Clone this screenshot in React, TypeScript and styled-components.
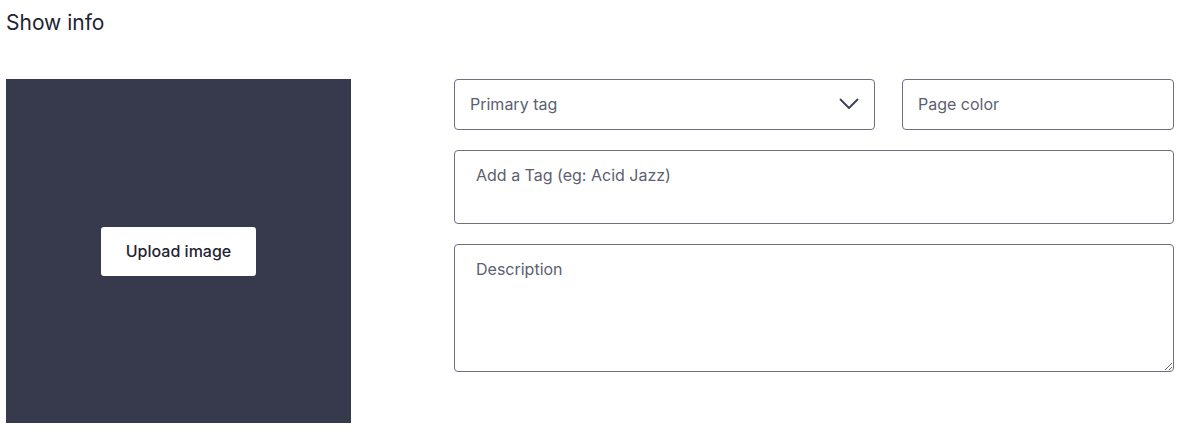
import React from "react";
import styled, { createGlobalStyle } from "styled-components";

const Global = createGlobalStyle`
  html, body { margin: 0; padding: 0; background: #ffffff; }
  body { font-family: Inter, "Open Sans", sans-serif; color: #1f2433; }
  * { box-sizing: border-box; }
`;

const Page = styled.div`
  padding: 0 10px 0 6px;
  width: 1184px;
  height: 436px;
  overflow: hidden;
`;

const Title = styled.h2`
  margin: 0;
  padding-top: 10px;
  height: 79px;
  font-size: 21px;
  line-height: 26px;
  font-weight: 400;
  color: #1f2433;
`;

const Body = styled.div`
  display: grid;
  grid-template-columns: 345px 720px;
  column-gap: 103px;
  align-items: start;
`;

const ImageBox = styled.div`
  width: 345px;
  height: 344px;
  background: #363a4c;
  display: flex;
  align-items: center;
  justify-content: center;
`;

const UploadButton = styled.button`
  width: 155px;
  height: 49px;
  border: none;
  border-radius: 3px;
  background: #ffffff;
  color: #1f2433;
  font-family: Inter, sans-serif;
  font-size: 16px;
  font-weight: 500;
`;

const Fields = styled.div`
  display: flex;
  flex-direction: column;
  gap: 20px;
`;

const Row = styled.div`
  display: grid;
  grid-template-columns: 421px 272px;
  column-gap: 27px;
`;

const Field = styled.div<{ $h: number; $px: number }>`
  height: ${(p) => p.$h}px;
  border: 1px solid #6e6f80;
  border-radius: 4px;
  padding: 0 ${(p) => p.$px}px;
  display: flex;
  align-items: center;
  justify-content: space-between;
  font-size: 16px;
  color: #5c5f70;
  background: #fff;
  padding-bottom: 2px;
`;

const Area = styled.textarea<{ $h: number; $resize: boolean }>`
  display: block;
  width: 720px;
  height: ${(p) => p.$h}px;
  border: 1px solid #6e6f80;
  border-radius: 4px;
  padding: 13px 21px;
  font-family: Inter, sans-serif;
  font-size: 16px;
  line-height: 22px;
  color: #1f2433;
  resize: ${(p) => (p.$resize ? "vertical" : "none")};
  outline: none;
  &::placeholder { color: #5c5f70; opacity: 1; }
`;

const Chevron = () => (
  <svg width="20" height="12" viewBox="0 0 20 12" fill="none">
    <path d="M1.5 1.5 L10 10 L18.5 1.5" stroke="#3b3f52" strokeWidth="1.8" strokeLinecap="round" strokeLinejoin="round" />
  </svg>
);

export default function App() {
  return (
    <>
      <Global />
      <Page>
        <Title>Show info</Title>
        <Body>
          <ImageBox>
            <UploadButton>Upload image</UploadButton>
          </ImageBox>
          <Fields>
            <Row>
              <Field $h={51} $px={15}>
                <span>Primary tag</span>
                <Chevron />
              </Field>
              <Field $h={51} $px={15}>
                <span>Page color</span>
              </Field>
            </Row>
            <Area $h={74} $resize={false} placeholder="Add a Tag (eg: Acid Jazz)" />
            <Area $h={128} $resize={true} placeholder="Description" />
          </Fields>
        </Body>
      </Page>
    </>
  );
}
